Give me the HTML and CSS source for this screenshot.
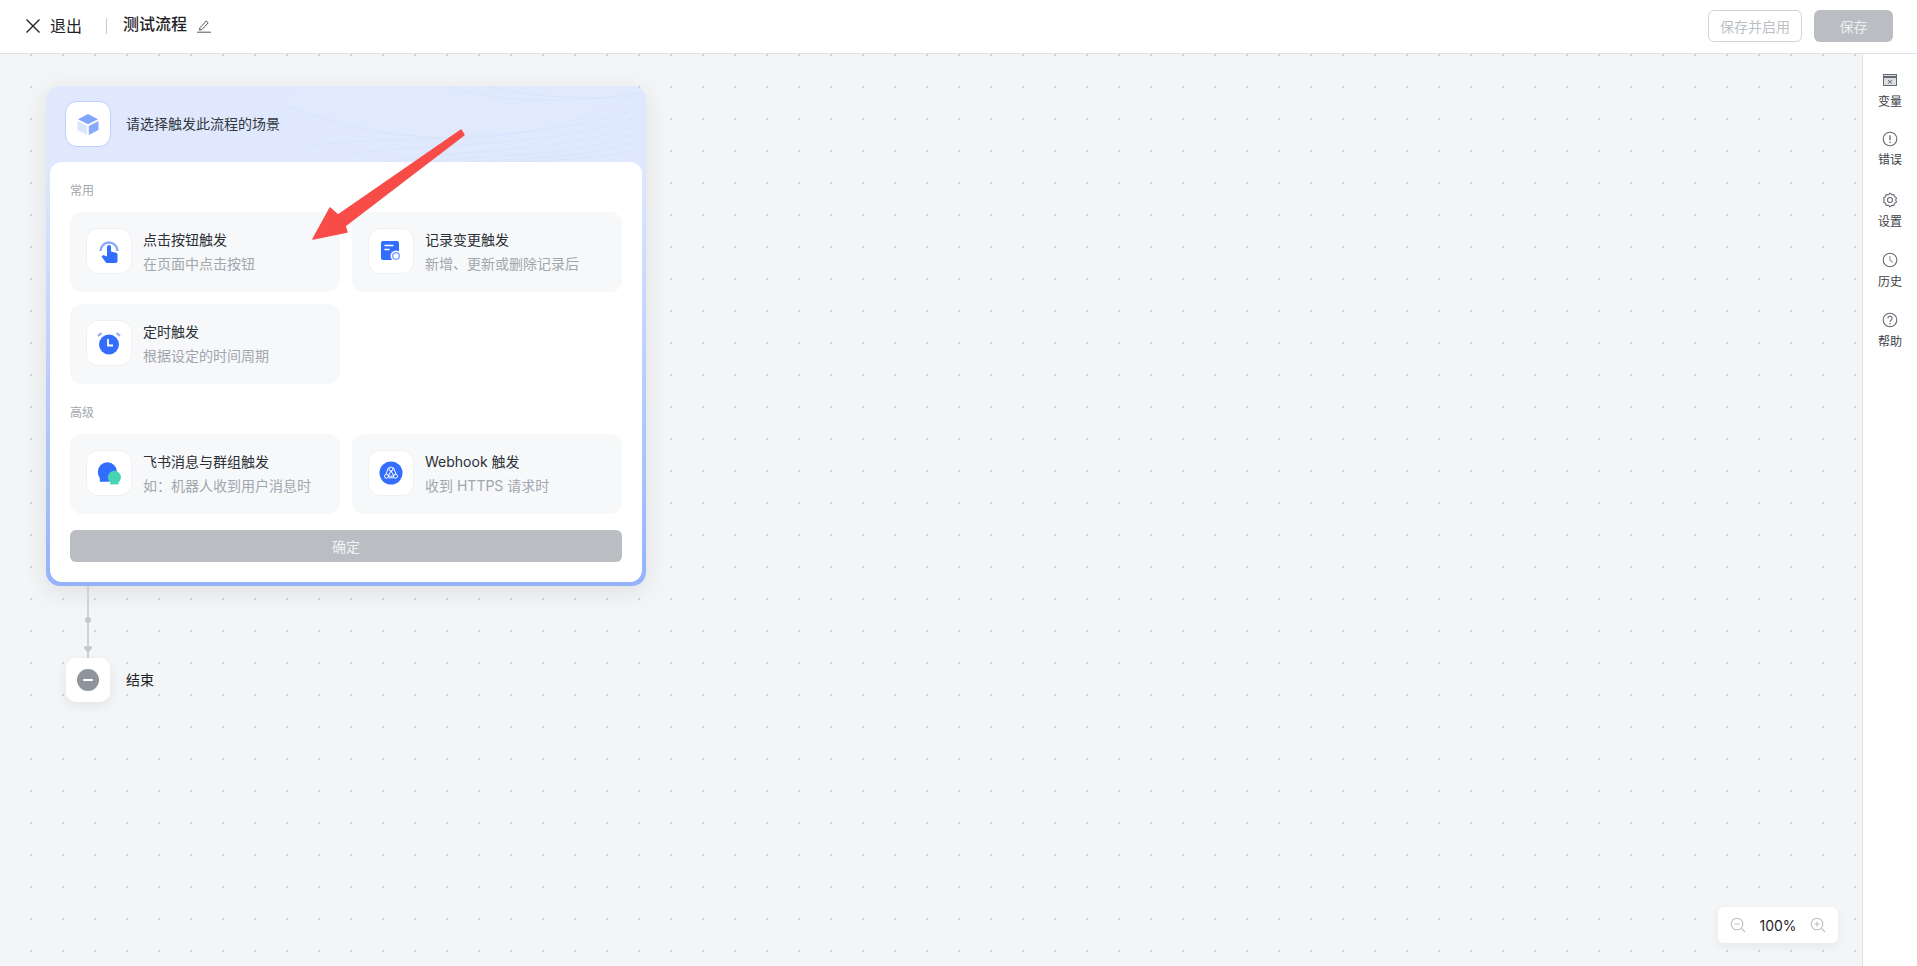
FILE: index.html
```html
<!DOCTYPE html>
<html lang="zh-CN">
<head>
<meta charset="utf-8">
<title>测试流程</title>
<link rel="stylesheet" href="styles.css">
</head>
<body>
<header class="topbar">
  <button class="exit">
    <svg class="exit-x" width="16" height="16" viewBox="0 0 16 16"><path d="M1.500 1.500l13 13M14.500 1.500l-13 13" stroke="#1f2329" stroke-width="1.400" fill="none"/></svg>
    <span class="exit-text">退出</span>
  </button>
  <span class="divider"></span>
  <span class="flow-name">测试流程</span>
  <svg class="edit" width="14" height="14" viewBox="0 0 14 14"><path d="M3 8.700L9.200 2l2 1.800-6.200 6.700-2.500.6z" fill="none" stroke="#51565d" stroke-width="1"/><path d="M0 13.200h14" stroke="#51565d" stroke-width="1"/></svg>
  <div class="actions">
    <button class="btn btn-ghost">保存并启用</button>
    <button class="btn btn-solid">保存</button>
  </div>
</header>
<div class="workspace">
  <main class="canvas">
    <section class="panel">
      <div class="panel-head">
        <svg class="waves" width="600" height="76" viewBox="0 0 600 76" preserveAspectRatio="none">
          <path d="M230 15C320 50 420 62 500 45 545 35 580 15 600 0H260z" fill="#e4ebfe" opacity=".5"/>
          <g fill="none" stroke="#d2defd" stroke-width=".6" opacity=".8">
            <path d="M240 20C330 54 420 60 500 42 545 32 580 14 598 0"/>
            <path d="M260 60C360 48 500 58 600 20"/>
            <path d="M300 68C400 56 510 62 600 28"/>
            <path d="M340 76C420 62 520 68 600 36"/>
            <path d="M380 76C450 68 530 72 600 44"/>
            <path d="M420 76C480 72 540 74 600 52"/>
            <path d="M460 76C510 74 560 74 600 60"/>
            <path d="M400 0C460 20 540 16 600 6"/>
            <path d="M440 0C490 14 550 12 600 12"/>
          </g>
        </svg>
        <div class="head-icon">
          <svg width="24" height="24" viewBox="0 0 24 24"><path d="M12 2l10 5.200-10 5-10-5z" fill="#7ea6fb"/><path d="M1.500 9l9.700 4.900V23l-9.700-5z" fill="#d9e4fd"/><path d="M22.500 9l-9.700 4.900V23l9.700-5z" fill="#86abfc"/></svg>
        </div>
        <span class="head-text">请选择触发此流程的场景</span>
      </div>
      <div class="panel-body">
        <div class="group-label">常用</div>
        <div class="grid">
          <div class="option">
            <div class="opt-icon">
              <svg width="24" height="26" viewBox="0 0 24 26"><path d="M3.500 13a8.500 8.500 0 1 1 17 0" fill="none" stroke="#86a9fb" stroke-width="2.400"/><path d="M10 9a2 2 0 0 1 4 0v4.500l5 1.200c1 .2 1.500 1 1.500 2V23a2 2 0 0 1-2 2h-8c-1 0-1.500-.4-2-1l-4-5.500 1.800-1.500L10 18.500z" fill="#336dfd"/></svg>
            </div>
            <div class="opt-text"><div class="opt-title">点击按钮触发</div><div class="opt-desc">在页面中点击按钮</div></div>
          </div>
          <div class="option">
            <div class="opt-icon">
              <svg width="22" height="22" viewBox="0 0 22 22"><path d="M4 1h13a2 2 0 0 1 2 2v17H3a2 2 0 0 1-2-2V3a2 2 0 0 1 2-2z" fill="#336dfd"/><path d="M4.500 5.500h9M4.500 9.500h5" stroke="#fff" stroke-width="1.600"/><circle cx="16" cy="16" r="5.500" fill="#fff"/><circle cx="16" cy="16" r="3.300" fill="none" stroke="#86a9fb" stroke-width="1.500"/></svg>
            </div>
            <div class="opt-text"><div class="opt-title">记录变更触发</div><div class="opt-desc">新增、更新或删除记录后</div></div>
          </div>
          <div class="option">
            <div class="opt-icon">
              <svg width="24" height="24" viewBox="0 0 24 24"><circle cx="12" cy="13.500" r="10" fill="#336dfd"/><path d="M11 8v6.500h5" fill="none" stroke="#fff" stroke-width="1.800"/><path d="M1 5l3.500-3M23 5l-3.500-3" stroke="#86a9fb" stroke-width="1.800"/></svg>
            </div>
            <div class="opt-text"><div class="opt-title">定时触发</div><div class="opt-desc">根据设定的时间周期</div></div>
          </div>
        </div>
        <div class="group-label group-label-adv">高级</div>
        <div class="grid">
          <div class="option">
            <div class="opt-icon">
              <svg width="26" height="26" viewBox="0 0 24 24"><path d="M10.500 2a8.800 8.800 0 0 1 8.800 8.800c0 4.800-3.500 9.200-8.800 9.200H3.500v-3.500A9 9 0 0 1 1.700 10.800 8.800 8.800 0 0 1 10.500 2z" fill="#336dfd"/><circle cx="17" cy="16" r="6" fill="#46d5b3"/><path d="M13 21h8v1.500h-8z" fill="#46d5b3"/></svg>
            </div>
            <div class="opt-text"><div class="opt-title">飞书消息与群组触发</div><div class="opt-desc">如：机器人收到用户消息时</div></div>
          </div>
          <div class="option">
            <div class="opt-icon">
              <svg width="24" height="24" viewBox="0 0 24 24"><circle cx="12" cy="12" r="11.500" fill="#336dfd"/><g fill="none" stroke="#fff" stroke-width="1"><circle cx="12" cy="8" r="2"/><circle cx="7.500" cy="15.200" r="2"/><circle cx="16.500" cy="15.200" r="2"/><path d="M12 10l-3 5.200h6z"/><path d="M9.500 6.500L7 13.200M14.500 6.500L17 13.200M9.500 16.800h5"/></g></svg>
            </div>
            <div class="opt-text"><div class="opt-title">Webhook 触发</div><div class="opt-desc">收到 HTTPS 请求时</div></div>
          </div>
        </div>
        <button class="confirm">确定</button>
      </div>
    </section>
    <div class="link">
      <span class="link-dot"></span>
      <svg class="link-arrow" width="8" height="7" viewBox="0 0 8 7"><path d="M2 0c1 0 1.500.5 2 .5S5 0 6 0c1.500 0 2 1 2 2L4 7 0 2c0-1 .5-2 2-2z" fill="#c4c7cc"/></svg>
    </div>
    <div class="end-node">
      <div class="end-box">
        <svg width="22" height="22" viewBox="0 0 22 22"><circle cx="11" cy="11" r="11" fill="#8f959e"/><path d="M7 11h8" stroke="#fff" stroke-width="2.200" stroke-linecap="round"/></svg>
      </div>
      <span class="end-text">结束</span>
    </div>
    <div class="zoom-ctl">
      <svg width="16" height="16" viewBox="0 0 16 16"><circle cx="7" cy="7" r="5.800" fill="none" stroke="#bbbfc4" stroke-width="1.100"/><path d="M11.500 11.500l3.500 3.500M4.500 7h5" stroke="#bbbfc4" stroke-width="1.100"/></svg>
      <span class="zoom-val">100%</span>
      <svg width="16" height="16" viewBox="0 0 16 16"><circle cx="7" cy="7" r="5.800" fill="none" stroke="#bbbfc4" stroke-width="1.100"/><path d="M11.500 11.500l3.500 3.500M4.500 7h5M7 4.500v5" stroke="#bbbfc4" stroke-width="1.100"/></svg>
    </div>
  </main>
  <aside class="sidebar">
    <div class="side-item">
      <svg width="16" height="16" viewBox="0 0 16 16"><rect x="1.500" y="2.500" width="13" height="11" fill="#dcdee1" stroke="#646a73" stroke-width="1"/><path d="M1.500 5h13" stroke="#646a73" stroke-width="2"/><path d="M6 8l4 3.500M10 8l-4 3.500" stroke="#646a73" stroke-width="1"/></svg>
      <span>变量</span>
    </div>
    <div class="side-item side-item-err">
      <svg width="16" height="16" viewBox="0 0 16 16"><circle cx="8" cy="8" r="6.800" fill="none" stroke="#646a73" stroke-width="1.100"/><path d="M8 4.200v5" stroke="#646a73" stroke-width="1.300"/><circle cx="8" cy="11.300" r=".8" fill="#646a73"/></svg>
      <span>错误</span>
    </div>
    <div class="side-item">
      <svg width="16" height="16" viewBox="0 0 16 16"><path d="M8 1l1.500 1.700 2.300-.2.700 2.200 2 1.200-.8 2.100.8 2.100-2 1.200-.7 2.200-2.300-.2L8 15l-1.500-1.700-2.300.2-.7-2.200-2-1.200.8-2.100-.8-2.100 2-1.200.7-2.200 2.300.2z" fill="none" stroke="#646a73" stroke-width="1.100" stroke-linejoin="round"/><circle cx="8" cy="8" r="2.500" fill="none" stroke="#646a73" stroke-width="1.100"/></svg>
      <span>设置</span>
    </div>
    <div class="side-item">
      <svg width="16" height="16" viewBox="0 0 16 16"><circle cx="8" cy="8" r="6.800" fill="none" stroke="#646a73" stroke-width="1.100"/><path d="M8 4v4.300l2.700 2" fill="none" stroke="#8f959e" stroke-width="1.100"/></svg>
      <span>历史</span>
    </div>
    <div class="side-item">
      <svg width="16" height="16" viewBox="0 0 16 16"><circle cx="8" cy="8" r="6.800" fill="none" stroke="#646a73" stroke-width="1.100"/><path d="M5.900 6.300a2.100 2.100 0 1 1 3.300 1.700c-.8.600-1.200 1-1.200 1.800" fill="none" stroke="#646a73" stroke-width="1.100"/><circle cx="8" cy="11.700" r=".8" fill="#646a73"/></svg>
      <span>帮助</span>
    </div>
  </aside>
</div>
<svg class="annotation" width="1917" height="966" viewBox="0 0 1917 966"><path d="M461 130L464 135 345 226 347 232 313 239 330 208 338 215z" fill="#f84c48" stroke="#f84c48" stroke-width="1.500" stroke-linejoin="round"/></svg>
</body>
</html>
```
FILE: styles.css
```css
* { box-sizing: border-box; }
html, body { height: 100%; }
body {
  margin: 0;
  height: 966px;
  overflow: hidden;
  display: flex;
  flex-direction: column;
  position: relative;
  background: #fff;
  color: #1f2329;
  font-family: Inter, "Noto Sans CJK SC", "Noto Sans", sans-serif;
  font-size: 14px;
}
button { font: inherit; border: 0; background: none; padding: 0; }

.topbar {
  flex: none;
  height: 54px;
  display: flex;
  align-items: center;
  padding: 0 24px 2px 25px;
  border-bottom: 1px solid #dee0e3;
  background: #fff;
}
.exit { display: flex; align-items: center; gap: 9px; font-size: 16px; color: #1f2329; }
.exit-x { margin-top: 1px; }
.exit-text { margin-bottom: 1px; }
.divider { width: 1px; height: 16px; background: #c8cace; margin: 0 16px 0 24px; }
.flow-name { font-size: 16px; font-weight: 500; line-height: 24px; margin-bottom: 4px; }
.edit { margin-left: 10px; }
.actions { margin-left: auto; display: flex; gap: 12px; }
.btn { height: 32px; border-radius: 6px; font-size: 14px; }
.btn-ghost { width: 94px; border: 1px solid #d0d3d6; color: #bbbfc4; background: #fff; }
.btn-solid { width: 79px; background: #babdc1; color: #edeef0; }

.workspace { flex: 1; min-height: 0; display: flex; }
.canvas {
  flex: 1;
  min-width: 0;
  position: relative;
  padding: 32px 0 0 46px;
  background-color: #f4f5f7;
  background-image: radial-gradient(circle at 1px 1px, #d2d5d9 1px, transparent 1.2px);
  background-size: 32px 32px;
  background-position: 30px 0;
}
.panel {
  width: 600px;
  height: 500px;
  padding: 0 4px 4px;
  border-radius: 14px;
  display: flex;
  flex-direction: column;
  background: linear-gradient(180deg, #dfe8fd 0%, #dfe8fd 16%, #94b3fb 100%);
  box-shadow: 0 6px 24px rgba(31, 35, 41, .1);
}
.panel-head {
  flex: none;
  height: 76px;
  margin: 0 -4px;
  padding: 0 19px;
  display: flex;
  align-items: center;
  gap: 15px;
  position: relative;
  overflow: hidden;
  border-radius: 14px 14px 0 0;
}
.waves { position: absolute; left: 0; top: 0; }
.head-icon {
  width: 46px;
  height: 46px;
  position: relative;
  flex: none;
  display: flex;
  align-items: center;
  justify-content: center;
  background: #fff;
  border: 1px solid #bcd0fb;
  border-radius: 12px;
}
.head-text { position: relative; color: #33373e; line-height: 22px; }
.panel-body {
  flex: 1;
  background: #fff;
  border-radius: 12px;
  padding: 21px 20px 0;
  display: flex;
  flex-direction: column;
}
.group-label { font-size: 12px; line-height: 16px; color: #a2a6ad; margin-bottom: 13px; }
.group-label-adv { margin-top: 21px; margin-bottom: 13px; }
.grid { display: grid; grid-template-columns: 270px 270px; gap: 12px; }
.option {
  height: 80px;
  padding: 0 16px;
  display: flex;
  align-items: center;
  gap: 11px;
  background: #f7f8fa;
  border-radius: 12px;
}
.opt-icon {
  width: 46px;
  height: 46px;
  flex: none;
  margin-bottom: 2px;
  display: flex;
  align-items: center;
  justify-content: center;
  background: #fff;
  border: 1px solid #eff0f1;
  border-radius: 12px;
}
.opt-title { line-height: 24px; color: #2b2f36; }
.opt-desc { line-height: 24px; color: #a2a6ad; }
.confirm {
  margin-top: 16px;
  height: 32px;
  width: 552px;
  border-radius: 6px;
  background: #babdc1;
  color: #f1f2f3;
  font-size: 14px;
}

.link {
  width: 2px;
  height: 72px;
  margin-left: 41px;
  background: #d0d2d6;
  display: flex;
  flex-direction: column;
  align-items: center;
  justify-content: space-between;
}
.link-dot { width: 6px; height: 6px; border-radius: 50%; background: #c4c7cc; flex: none; margin-top: 31px; }
.link-arrow { flex: none; margin-bottom: 5px; }
.end-node { display: flex; align-items: center; gap: 16px; margin-left: 20px; }
.end-box {
  width: 44px;
  height: 44px;
  display: flex;
  align-items: center;
  justify-content: center;
  background: #fff;
  border-radius: 10px;
  box-shadow: 0 4px 12px rgba(31, 35, 41, .08);
}
.end-text { line-height: 22px; }

.zoom-ctl {
  position: absolute;
  left: 1718px;
  top: 853px;
  width: 120px;
  height: 36px;
  padding: 0 12px;
  display: flex;
  align-items: center;
  justify-content: space-between;
  background: #fff;
  border-radius: 6px;
  box-shadow: 0 4px 10px rgba(31, 35, 41, .06);
}
.zoom-val { font-size: 14px; color: #1f2329; }

.sidebar {
  flex: none;
  width: 55px;
  border-left: 1px solid #dee0e3;
  background: #fff;
  padding-top: 18px;
  display: flex;
  flex-direction: column;
}
.side-item {
  height: 60px;
  display: flex;
  flex-direction: column;
  align-items: center;
  font-size: 12px;
  line-height: 20px;
  color: #3d424a;
  gap: 4px;
}
.side-item-err { margin-top: -1px; height: 61px; gap: 3px; }
.annotation { position: absolute; left: 0; top: 0; pointer-events: none; }
```
